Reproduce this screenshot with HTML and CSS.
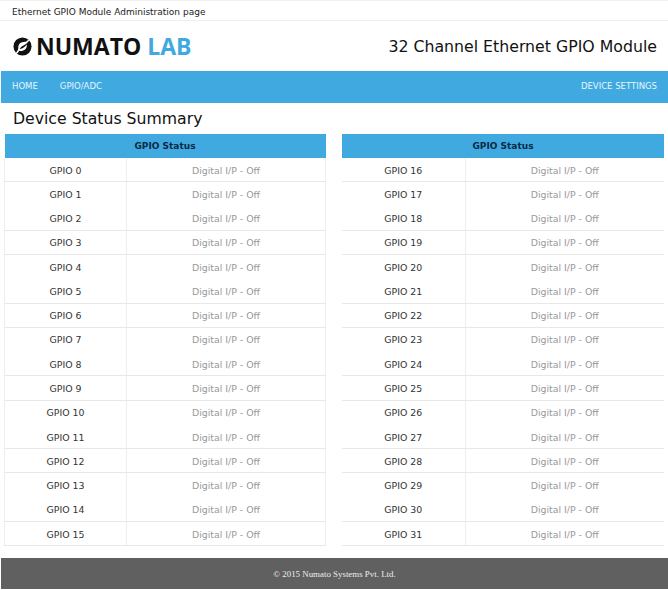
FILE: index.html
```html
<!DOCTYPE html>
<html lang="en">
<head>
  <meta charset="UTF-8" />
  <title>Ethernet GPIO Module Administration page</title>
  <link rel="stylesheet" href="styles.css">
</head>
<body>
  <div class="topbar">Ethernet GPIO Module Administration page</div>

  <div class="header">
    <div class="logo">
      <svg class="logo-mark" viewBox="0 0 20 20" width="19" height="19">
        <circle cx="10" cy="10" r="9.500" fill="#111"/>
        <path d="M2.800 16.800 C4.500 15 5.500 13.500 5.600 11.500 C5.300 8 7.500 5.300 11 5.200 C12.500 5.200 13.500 5.300 14.800 4 L16.500 2.500 L17.500 3.500 L15.500 5.500 C14.500 6.800 13 8 11 9 C8.500 10.300 6.500 12.500 4 18 Z" fill="#fff"/>
        <path d="M14.500 8 C15 11.500 12.500 14.600 9 14.800 C8 14.800 7.300 14.700 6.500 14.400 L5 17 L4 16 L6.500 12.700 C8.500 12.800 12 11.500 14.500 8 Z" fill="#fff"/>
      </svg>
      <span class="logo-text">NUMATO <span class="logo-lab">LAB</span></span>
    </div>
    <div class="module-name">32 Channel Ethernet GPIO Module</div>
  </div>

  <div class="nav">
    <a href="#">HOME</a>
    <a href="#">GPIO/ADC</a>
    <a href="#" class="nav-right">DEVICE SETTINGS</a>
  </div>

  <h1>Device Status Summary</h1>

  <div class="tables">
    <table id="tableLeft">
      <colgroup><col class="col-name"><col></colgroup>
      <thead><tr><th colspan="2">GPIO Status</th></tr></thead>
      <tbody></tbody>
    </table>
    <table id="tableRight">
      <colgroup><col class="col-name"><col></colgroup>
      <thead><tr><th colspan="2">GPIO Status</th></tr></thead>
      <tbody></tbody>
    </table>
  </div>

  <div class="footer">© 2015 Numato Systems Pvt. Ltd.</div>

  <script>
    function addRows(id, start) {
      const body = document.querySelector("#" + id + " tbody");
      for (let i = 0; i < 16; i++) {
        const row = document.createElement("tr");
        // every third divider doesn't show in the original
        if (i % 3 === 1) row.className = "no-line";
        row.innerHTML = `<td class="name">GPIO ${start + i}</td><td class="value">Digital I/P - Off</td>`;
        body.appendChild(row);
      }
    }
    addRows("tableLeft", 0);
    addRows("tableRight", 16);
  </script>
</body>
</html>
```

FILE: styles.css
```css
html, body {
  margin: 0;
  padding: 0;
}
body {
  font-family: 'DejaVu Sans', Verdana, sans-serif;
  font-size: 9.400px;
  color: #222;
  background-color: #fff;
  width: 668px;
  height: 590px;
  overflow: hidden;
}
.topbar {
  height: 19px;
  line-height: 22px;
  padding-left: 12px;
  border-top: 1px solid #f0f0f0;
  border-bottom: 1px solid #eee;
  font-size: 9px;
}
.header {
  height: 50px;
  display: flex;
  justify-content: space-between;
  align-items: center;
  padding: 0 11px 0 13px;
}
.logo {
  display: flex;
  align-items: center;
  gap: 4px;
}
.logo-mark {
  display: block;
}
.logo-text {
  font-family: 'Open Sans', sans-serif;
  font-weight: 700;
  font-size: 23px;
  color: #111;
}
.logo-lab {
  color: #3fa9e0;
}
.module-name {
  font-size: 15.750px;
  color: #111;
}
.nav {
  height: 32px;
  margin-left: 1px;
  padding: 0 11px 2px;
  box-sizing: border-box;
  background-color: #3fa9e0;
  display: flex;
  align-items: center;
  gap: 22px;
}
.nav a {
  color: #e8f6fd;
  text-decoration: none;
  font-size: 8.500px;
}
.nav .nav-right {
  margin-left: auto;
}
h1 {
  margin: 0;
  padding: 6px 0 0 13px;
  height: 25px;
  font-size: 15.700px;
  font-weight: normal;
  color: #111;
  line-height: 20px;
}
.tables {
  display: flex;
  justify-content: space-between;
  padding: 0 4px;
}
table {
  width: 322px;
  border-collapse: collapse;
  table-layout: fixed;
}
.col-name {
  width: 122px;
}
#tableRight .col-name {
  width: 123px;
}
th {
  height: 24px;
  padding: 0;
  background-color: #3fa9e0;
  color: #0a2a45;
  font-size: 9px;
  font-weight: bold;
}
td {
  height: 22.280px;
  padding: 1px 0 0;
  text-align: center;
  border-bottom: 1px solid #e8e8e8;
}
.no-line td {
  border-bottom-color: transparent;
}
.name {
  color: #333;
  border-right: 1px solid #eee;
}
.value {
  color: #999;
}
#tableLeft td.name {
  border-left: 1px solid #eee;
}
#tableLeft td.value {
  border-right: 1px solid #eee;
}
.footer {
  height: 31px;
  line-height: 32px;
  margin: 12px 0 0 1px;
  background-color: #606060;
  color: #eee;
  text-align: center;
  font-family: 'Liberation Serif', serif;
  font-size: 8.900px;
}
```
